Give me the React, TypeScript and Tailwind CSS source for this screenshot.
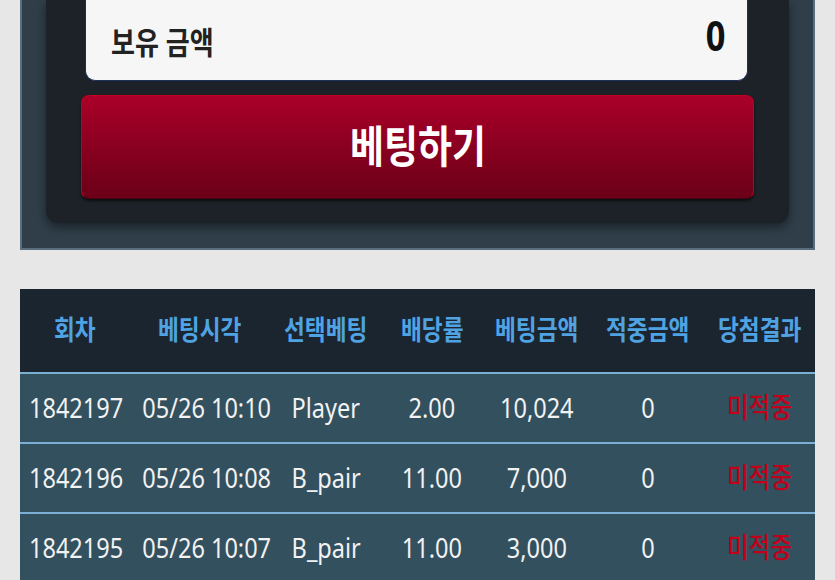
const headers = ['회차', '베팅시각', '선택베팅', '배당률', '베팅금액', '적중금액', '당첨결과']
const widths = ['w-[110px]', 'w-[140px]', 'w-[112px]', 'w-[100px]', 'w-[110px]', 'w-[112px]', 'w-[111px]']

const rows = [
  ['1842197', '05/26 10:10', 'Player', '2.00', '10,024', '0'],
  ['1842196', '05/26 10:08', 'B_pair', '11.00', '7,000', '0'],
  ['1842195', '05/26 10:07', 'B_pair', '11.00', '3,000', '0'],
]

const font = "font-['Noto_Sans','Noto_Sans_CJK_KR',sans-serif]"

function Narrow({ children, className = '' }: { children: React.ReactNode; className?: string }) {
  return <span className={`inline-block scale-x-[0.84] whitespace-nowrap ${className}`}>{children}</span>
}

export default function App() {
  return (
    <div className={`min-h-screen overflow-hidden bg-[#e7e7e7] px-[20px] ${font}`}>
      <div className="border-x-2 border-b-2 border-[#5b6e7d] bg-[#2f3e49] px-[24px] pb-[25px]">
        <div className="rounded-b-[12px] bg-[#1c2227] px-[35px] pb-[24px] shadow-[0_4px_10px_rgba(0,0,0,0.45)]">
          <div className="ml-[4px] mr-[6px] flex h-[81px] items-center justify-between rounded-b-[10px] border border-t-0 border-[#1f2f5c] bg-[#f6f6f6] pl-[25px] pr-[22px]">
            <Narrow className="origin-left pt-[4px] text-[31px] font-bold leading-none text-[#222]">
              보유 금액
            </Narrow>
            <Narrow className="origin-right pb-[10px] text-[41px] font-bold leading-none text-[#111]">0</Narrow>
          </div>
          <button className="mt-[14px] flex h-[104px] w-full items-center justify-center rounded-[8px] border border-[#c2001f] border-b-[#4a000e] bg-gradient-to-b from-[#aa0029] to-[#6b0018] shadow-[0_2px_3px_rgba(0,0,0,0.6)]">
            <Narrow className="pb-[2px] text-[44px] font-bold leading-none text-white">베팅하기</Narrow>
          </button>
        </div>
      </div>

      <table className="mt-[39px] w-full table-fixed border-collapse">
        <thead>
          <tr className="h-[84px] border-b-2 border-[#7ab0d4] bg-[#1b2530]">
            {headers.map((h, i) => (
              <th key={h} className={`${widths[i]} p-0 text-center`}>
                <Narrow className="text-[27px] font-bold leading-none text-[#4fa3e3]">{h}</Narrow>
              </th>
            ))}
          </tr>
        </thead>
        <tbody>
          {rows.map((r) => (
            <tr key={r[0]} className="h-[70px] border-b-2 border-[#7ab0d4] bg-[#33505f]">
              {r.map((c, i) => (
                <td key={i} className="p-0 text-center">
                  <Narrow className="text-[28px] leading-none text-[#f2f2f2]">{c}</Narrow>
                </td>
              ))}
              <td className="p-0 text-center">
                <Narrow className="text-[28px] font-medium leading-none text-[#c2001a]">미적중</Narrow>
              </td>
            </tr>
          ))}
        </tbody>
      </table>
    </div>
  )
}
